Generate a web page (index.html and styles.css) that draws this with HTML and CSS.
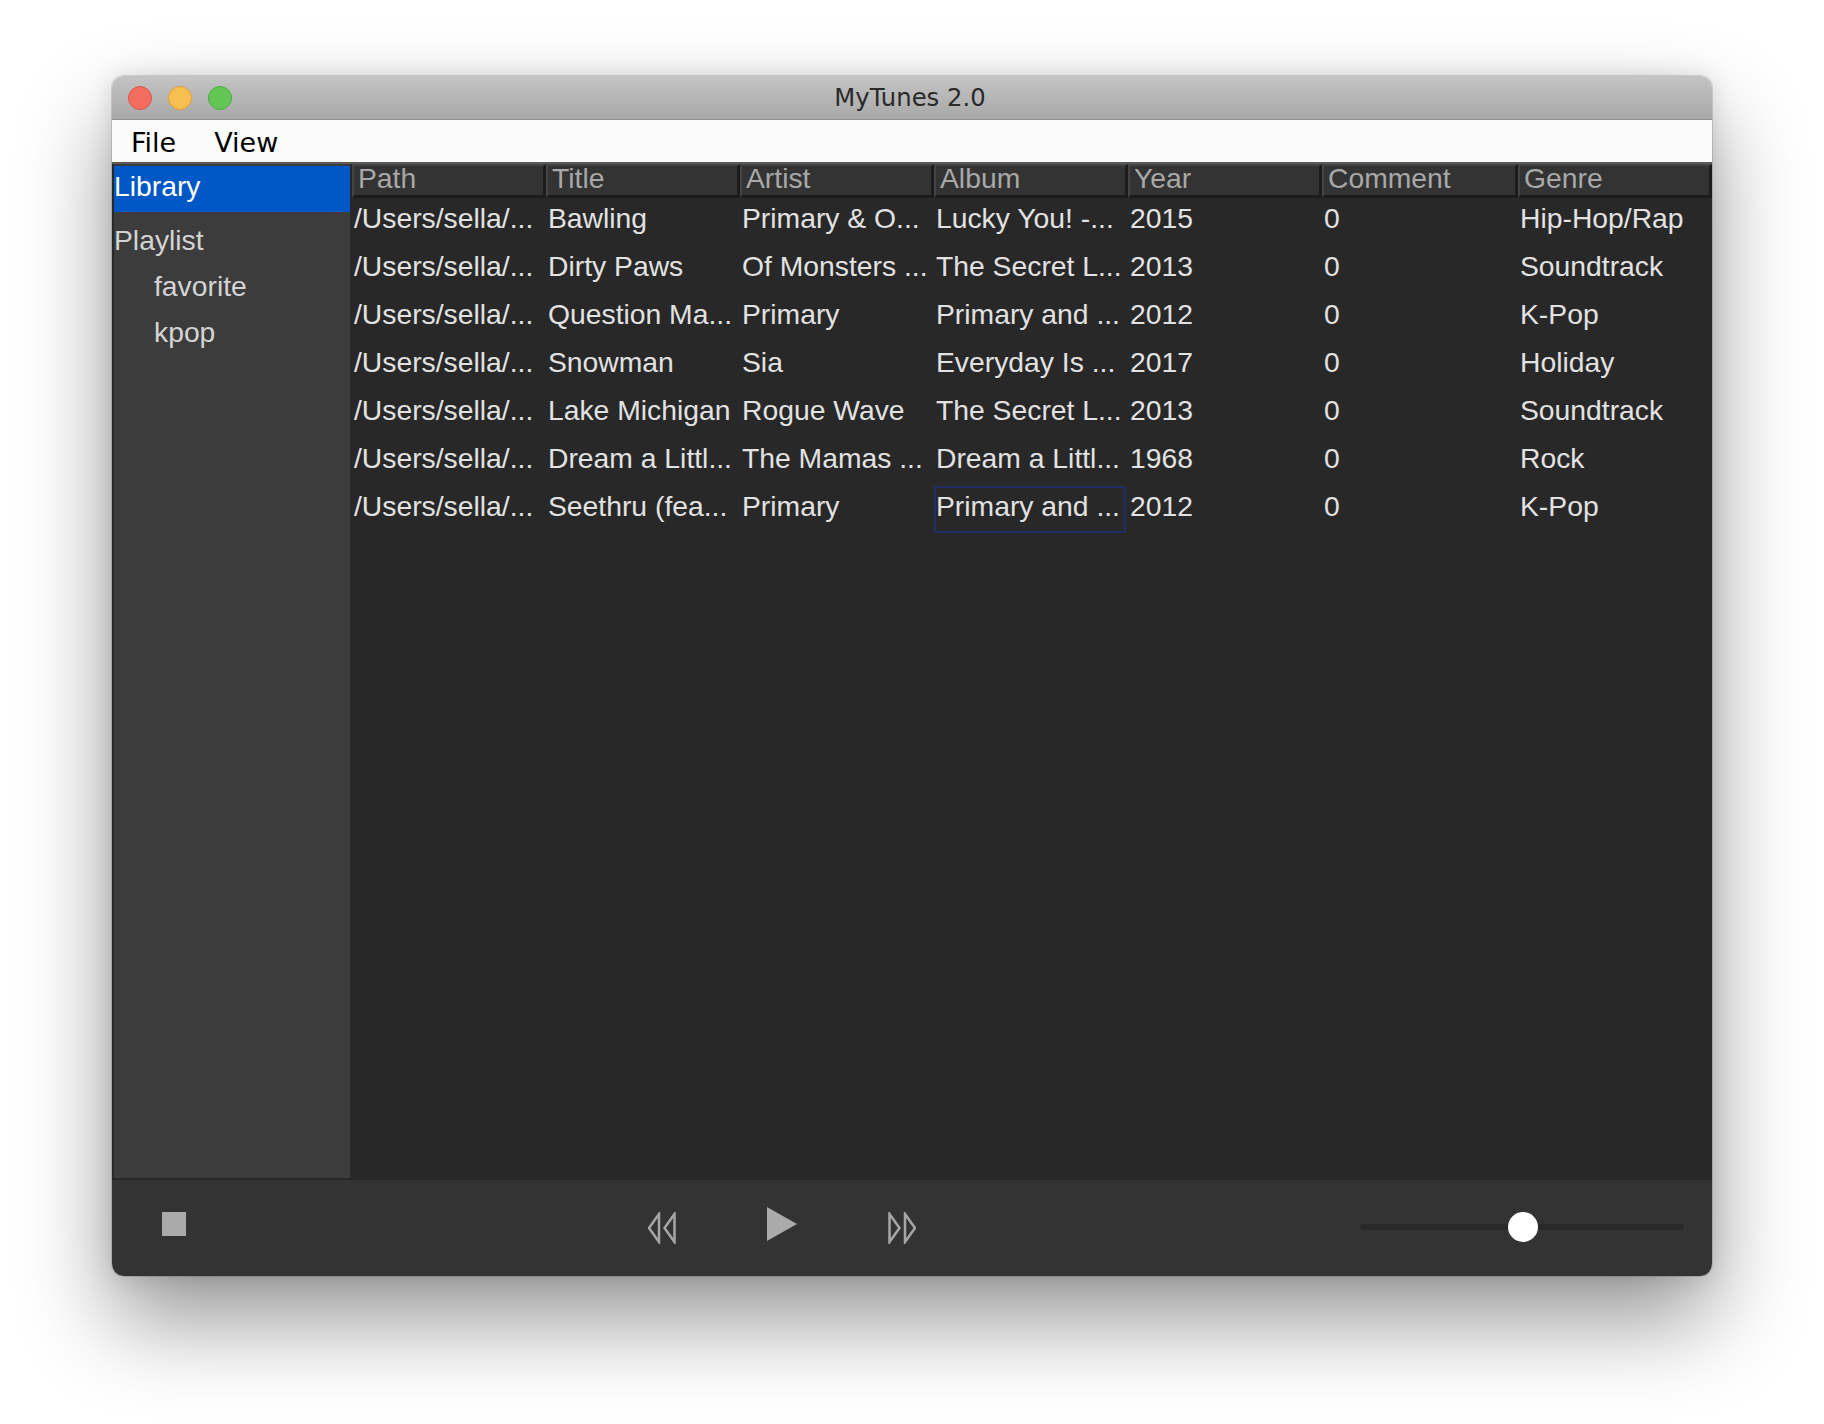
FILE: index.html
```html
<!DOCTYPE html>
<html lang="en">
<head>
  <meta charset="UTF-8" />
  <title>MyTunes 2.0</title>
  <link rel="stylesheet" href="styles.css">
</head>
<body>
  <div class="window">
    <div class="titlebar">
      <div class="lights">
        <span class="light red"></span>
        <span class="light yellow"></span>
        <span class="light green"></span>
      </div>
      <div class="title">MyTunes 2.0</div>
    </div>

    <div class="menubar">
      <span class="menu">File</span>
      <span class="menu">View</span>
    </div>

    <div class="main">
      <div class="sidebar">
        <div class="side-item selected">Library</div>
        <div class="side-item group">Playlist</div>
        <div class="side-item child">favorite</div>
        <div class="side-item child">kpop</div>
      </div>

      <div class="library">
        <div class="row head">
          <div class="hcell">Path</div>
          <div class="hcell">Title</div>
          <div class="hcell">Artist</div>
          <div class="hcell">Album</div>
          <div class="hcell">Year</div>
          <div class="hcell">Comment</div>
          <div class="hcell">Genre</div>
        </div>
        <div class="row">
          <div class="cell">/Users/sella/...</div>
          <div class="cell">Bawling</div>
          <div class="cell">Primary &amp; O...</div>
          <div class="cell">Lucky You! -...</div>
          <div class="cell">2015</div>
          <div class="cell">0</div>
          <div class="cell">Hip-Hop/Rap</div>
        </div>
        <div class="row">
          <div class="cell">/Users/sella/...</div>
          <div class="cell">Dirty Paws</div>
          <div class="cell">Of Monsters ...</div>
          <div class="cell">The Secret L...</div>
          <div class="cell">2013</div>
          <div class="cell">0</div>
          <div class="cell">Soundtrack</div>
        </div>
        <div class="row">
          <div class="cell">/Users/sella/...</div>
          <div class="cell">Question Ma...</div>
          <div class="cell">Primary</div>
          <div class="cell">Primary and ...</div>
          <div class="cell">2012</div>
          <div class="cell">0</div>
          <div class="cell">K-Pop</div>
        </div>
        <div class="row">
          <div class="cell">/Users/sella/...</div>
          <div class="cell">Snowman</div>
          <div class="cell">Sia</div>
          <div class="cell">Everyday Is ...</div>
          <div class="cell">2017</div>
          <div class="cell">0</div>
          <div class="cell">Holiday</div>
        </div>
        <div class="row">
          <div class="cell">/Users/sella/...</div>
          <div class="cell">Lake Michigan</div>
          <div class="cell">Rogue Wave</div>
          <div class="cell">The Secret L...</div>
          <div class="cell">2013</div>
          <div class="cell">0</div>
          <div class="cell">Soundtrack</div>
        </div>
        <div class="row">
          <div class="cell">/Users/sella/...</div>
          <div class="cell">Dream a Littl...</div>
          <div class="cell">The Mamas ...</div>
          <div class="cell">Dream a Littl...</div>
          <div class="cell">1968</div>
          <div class="cell">0</div>
          <div class="cell">Rock</div>
        </div>
        <div class="row">
          <div class="cell">/Users/sella/...</div>
          <div class="cell">Seethru (fea...</div>
          <div class="cell">Primary</div>
          <div class="cell focused">Primary and ...</div>
          <div class="cell">2012</div>
          <div class="cell">0</div>
          <div class="cell">K-Pop</div>
        </div>
      </div>
    </div>

    <div class="controls">
      <div class="stop"></div>
      <div class="transport">
        <svg class="skip" width="28" height="32" viewBox="0 0 28 32">
          <path d="M11 2 L1 16 L11 30 Z M26.500 2 L16.500 16 L26.500 30 Z" />
        </svg>
        <svg class="play" width="30" height="34" viewBox="0 0 30 34">
          <path d="M0 0 L30 17 L0 34 Z" />
        </svg>
        <svg class="skip" width="28" height="32" viewBox="0 0 28 32">
          <path d="M1.500 2 L11.500 16 L1.500 30 Z M17 2 L27 16 L17 30 Z" />
        </svg>
      </div>
      <div class="volume">
        <div class="thumb"></div>
      </div>
    </div>
  </div>
</body>
</html>
```

FILE: styles.css
```css
body {
    margin: 0;
    height: 1424px;
    background-color: #fff;
    overflow: hidden;
    font-family: "Liberation Sans", Arial, sans-serif;
}

.window {
    width: 1600px;
    height: 1200px;
    margin: 76px auto 0;
    display: flex;
    flex-direction: column;
    border-radius: 12px;
    overflow: hidden;
    box-shadow: 0 44px 90px rgba(0, 0, 0, 0.42), 0 0 24px rgba(0, 0, 0, 0.12), 0 0 0 1px rgba(0, 0, 0, 0.12);
}

.titlebar {
    height: 44px;
    flex: none;
    display: flex;
    align-items: center;
    position: relative;
    background: linear-gradient(#c4c4c4, #a8a8a8);
    border-bottom: 1px solid #8f8f8f;
    box-sizing: border-box;
}

.lights {
    display: flex;
    gap: 16px;
    padding-left: 16px;
}

.light {
    width: 24px;
    height: 24px;
    border-radius: 50%;
    box-sizing: border-box;
}

.red {
    background-color: #f26d60;
    border: 1px solid #d9564a;
}

.yellow {
    background-color: #f7bf4f;
    border: 1px solid #dea034;
}

.green {
    background-color: #62c554;
    border: 1px solid #4ead41;
}

.title {
    position: absolute;
    top: 7px;
    left: 0;
    right: 4px;
    text-align: center;
    font-family: "DejaVu Sans", sans-serif;
    font-size: 24.3px;
    color: #2a2a2a;
}

.menubar {
    height: 42px;
    flex: none;
    display: flex;
    align-items: center;
    gap: 38px;
    padding-left: 19px;
    background-color: #fbfbfb;
    font-family: "DejaVu Sans", sans-serif;
    font-size: 27px;
    color: #000;
}

.menu {
    position: relative;
    top: 1px;
}

.main {
    flex: 1;
    display: flex;
    min-height: 0;
    background-color: #282828;
    border-top: 2px solid #5a5a5a;
}

.sidebar {
    width: 236px;
    margin-left: 2px;
    margin-bottom: 2px;
    padding-top: 2px;
    background-color: #3c3c3c;
    font-size: 28.3px;
    color: #d4d4d4;
}

.side-item {
    height: 46px;
    line-height: 40px;
}

.selected {
    background-color: #0057c6;
    color: #fff;
}

.group {
    height: 47px;
    margin-top: 7px;
    line-height: 42px;
}

.child {
    padding-left: 40px;
}

.library {
    flex: 1;
    padding-left: 2px;
    min-width: 0;
}

.row {
    display: grid;
    grid-template-columns: 194px 194px 194px 194px 194px 196px 194px;
    height: 48px;
    font-size: 28.3px;
    color: #e2e2e2;
}

.head {
    height: 34px;
    color: #a8a8a8;
}

.hcell {
    background-color: #333;
    border-top: 2px solid #444;
    border-left: 2px solid #444;
    border-right: 3px solid #1c1c1c;
    border-bottom: 3px solid #1c1c1c;
    padding-left: 4px;
    line-height: 25px;
    box-sizing: border-box;
}

.cell {
    padding-left: 2px;
    line-height: 40px;
    white-space: nowrap;
    overflow: hidden;
    box-sizing: border-box;
}

.focused {
    height: 47px;
    margin-right: 2px;
    padding-left: 0;
    line-height: 36px;
    border: 2px solid #202e66;
}

.controls {
    height: 96px;
    flex: none;
    display: flex;
    align-items: center;
    position: relative;
    background-color: #333;
}

.stop {
    width: 24px;
    height: 24px;
    margin-left: 50px;
    margin-top: -8px;
    background-color: #aaa;
}

.transport {
    position: absolute;
    left: 536px;
    top: 24px;
    display: flex;
    align-items: center;
    gap: 91px;
}

.skip {
    margin-top: 8px;
}

.skip path {
    fill: none;
    stroke: #a6a6a6;
    stroke-width: 2.500;
}

.play path {
    fill: #aaa;
}

.volume {
    position: absolute;
    left: 1248px;
    top: 44px;
    width: 324px;
    height: 6px;
    border-radius: 3px;
    background-color: #292929;
}

.thumb {
    position: absolute;
    left: 148px;
    top: -12px;
    width: 30px;
    height: 30px;
    border-radius: 50%;
    background-color: #fff;
}
```
